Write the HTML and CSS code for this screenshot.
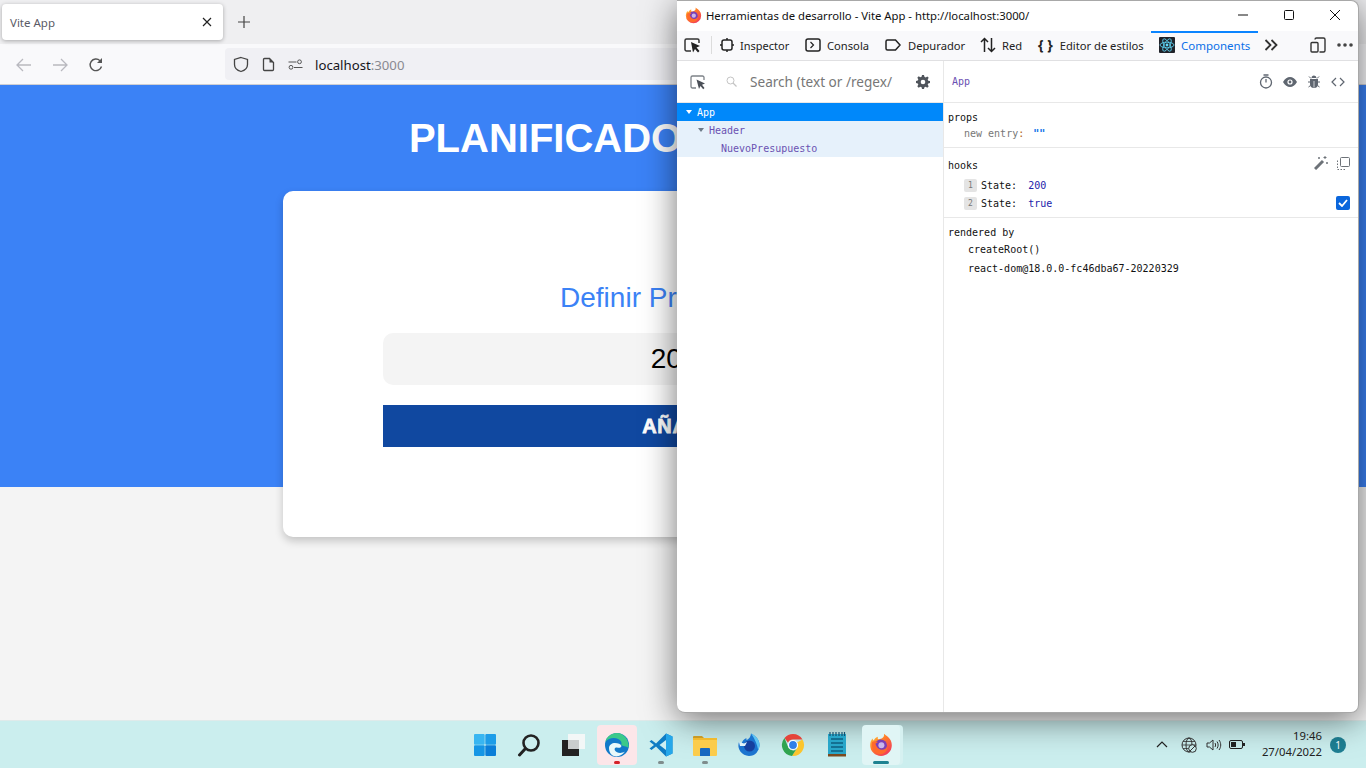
FILE: index.html
```html
<!DOCTYPE html>
<html lang="es">
<head>
    <meta charset="UTF-8">
    <title>Vite App</title>
    <link rel="stylesheet" href="styles.css">
</head>
<body>
    <svg class="defs" width="0" height="0">
        <defs>
            <linearGradient id="fxOuter" x1="0" y1="0" x2="0.8" y2="1">
                <stop offset="0" stop-color="#ffd53a"/>
                <stop offset="0.45" stop-color="#ff7a2a"/>
                <stop offset="1" stop-color="#f0365f"/>
            </linearGradient>
            <symbol id="firefox" viewBox="0 0 24 24">
                <path d="M12 23a10.8 10.8 0 0 1-10.800-10.800c0-2.600.8-5 2.300-6.700.2 1 .6 1.600 1.200 2 .8-2 2.500-3.300 4.300-3.800-.5 1-.4 2 .2 2.600C11.600 6 14 5.500 15 3c-.1-.9-.1-1.600.3-2.300 1 1.500 2.600 2.200 4 3.500 2.300 2 3.500 4.900 3.500 8A10.800 10.800 0 0 1 12 23z" fill="url(#fxOuter)"/>
                <circle cx="11.800" cy="12.600" r="6.200" fill="#7b3fb5"/>
                <circle cx="12.400" cy="12.200" r="3" fill="#c9b6ec"/>
                <path d="M3 9c2-1 4-1 6 0-1 1-2 1-2.500 1.500C7 13 9 16.500 12.500 16.800c3 .2 5-1.500 6-3.500.2 5-4 8.200-7.500 8C6 21 2 16 3 9z" fill="#ff6a2c"/>
            </symbol>
        </defs>
    </svg>

    <div class="browser">
        <div class="tabbar">
            <div class="tab">
                <span class="tab-title">Vite App</span>
                <svg class="tab-close" width="10" height="10" viewBox="0 0 10 10"><path d="M1 1l8 8M9 1l-8 8" stroke="#222" stroke-width="1.200"/></svg>
            </div>
            <svg class="tab-new" width="14" height="14" viewBox="0 0 14 14"><path d="M7 1v12M1 7h12" stroke="#444" stroke-width="1.200"/></svg>
        </div>
        <div class="toolbar">
            <svg class="nav-icon" width="18" height="16" viewBox="0 0 18 16"><path d="M16 8H2M8 2L2 8l6 6" fill="none" stroke="#b9b9bf" stroke-width="1.300"/></svg>
            <svg class="nav-icon" width="18" height="16" viewBox="0 0 18 16"><path d="M2 8h14M10 2l6 6-6 6" fill="none" stroke="#b9b9bf" stroke-width="1.300"/></svg>
            <svg class="nav-icon" width="18" height="16" viewBox="0 0 16 16"><path d="M13.500 9.500A5.800 5.800 0 1 1 12 3.700" fill="none" stroke="#555" stroke-width="1.400"/><path d="M14 1v5h-5z" fill="#555"/></svg>
            <div class="urlbar">
                <svg width="16" height="17" viewBox="0 0 16 17"><path d="M8 1.500l6.500 2v5c0 3.500-3 6-6.500 7-3.500-1-6.500-3.500-6.500-7v-5z" fill="none" stroke="#444" stroke-width="1.300"/></svg>
                <svg width="13" height="15" viewBox="0 0 13 15"><path d="M1.500 2.500a1 1 0 0 1 1-1h5l4 4v7a1 1 0 0 1-1 1h-8a1 1 0 0 1-1-1z" fill="none" stroke="#444" stroke-width="1.300"/><path d="M7.500 1.500v4h4" fill="#444"/></svg>
                <svg width="15" height="11" viewBox="0 0 15 11"><circle cx="11.500" cy="2.800" r="1.900" fill="none" stroke="#555"/><path d="M0.500 3h8M6 8.500h8.500" stroke="#555"/><circle cx="3" cy="8.300" r="1.900" fill="none" stroke="#555"/></svg>
                <span class="url-text">localhost<span class="url-port">:3000</span></span>
            </div>
        </div>
    </div>

    <main class="page">
        <header class="hero">
            <h1 class="hero-title">PLANIFICADOR DE GASTOS</h1>
            <form class="budget-card">
                <label class="budget-label">Definir Presupuesto</label>
                <input class="budget-input" type="text" value="200">
                <input class="budget-submit" type="button" value="AÑADIR">
            </form>
        </header>
    </main>

    <section class="devtools">
        <div class="dt-title">
            <svg width="17" height="17"><use href="#firefox"/></svg>
            <span class="dt-title-text">Herramientas de desarrollo - Vite App - http://localhost:3000/</span>
            <div class="win-btns">
                <svg width="46" height="30" viewBox="0 0 46 30"><path d="M18 15h10" stroke="#111"/></svg>
                <svg width="46" height="30" viewBox="0 0 46 30"><rect x="18.500" y="10.500" width="9" height="9" rx="1" fill="none" stroke="#111"/></svg>
                <svg width="46" height="30" viewBox="0 0 46 30"><path d="M18 10l10 10M28 10L18 20" stroke="#111"/></svg>
            </div>
        </div>

        <div class="dt-tabs">
            <div class="dt-pick">
                <svg width="17" height="16" viewBox="0 0 17 16"><path d="M7 14H2.500A1.500 1.500 0 0 1 1 12.500v-9A1.500 1.500 0 0 1 2.500 2h11A1.500 1.500 0 0 1 15 3.500V6" fill="none" stroke="#333" stroke-width="1.500"/><path d="M7 5l9 4-3.500 1.500L15.500 14l-1.500 1.500-3-3.500L9 15.500z" fill="#222"/></svg>
            </div>
            <div class="dt-tab tab-inspector">
                <svg width="14" height="14" viewBox="0 0 14 14"><rect x="2" y="2" width="10" height="10" rx="2" fill="none" stroke="#222" stroke-width="1.500"/><path d="M7 0v2M7 12v2M0 7h2M12 7h2" stroke="#222" stroke-width="1.500"/></svg>
                <span>Inspector</span>
            </div>
            <div class="dt-tab tab-console">
                <svg width="16" height="14" viewBox="0 0 16 14"><rect x="1" y="1" width="14" height="12" rx="2" fill="none" stroke="#222" stroke-width="1.500"/><path d="M5.500 4l3 3-3 3" fill="none" stroke="#222" stroke-width="1.200"/></svg>
                <span>Consola</span>
            </div>
            <div class="dt-tab tab-debugger">
                <svg width="16" height="12" viewBox="0 0 16 12"><path d="M1 2.500A1.500 1.500 0 0 1 2.500 1h8L15 6l-4.500 5h-8A1.500 1.500 0 0 1 1 9.500z" fill="none" stroke="#222" stroke-width="1.500"/></svg>
                <span>Depurador</span>
            </div>
            <div class="dt-tab tab-network">
                <svg width="16" height="16" viewBox="0 0 16 16"><path d="M4.500 15V2M1 5l3.500-3.500L8 5M11.500 1v13M8 11l3.500 3.500L15 11" fill="none" stroke="#222" stroke-width="1.500"/></svg>
                <span>Red</span>
            </div>
            <div class="dt-tab tab-styles">
                <span class="brace">{ }</span>
                <span>Editor de estilos</span>
            </div>
            <div class="dt-tab tab-components">
                <svg width="16" height="16" viewBox="0 0 16 16"><rect width="16" height="16" rx="1" fill="#20232a"/><g fill="none" stroke="#61dafb" stroke-width="0.800"><ellipse cx="8" cy="8" rx="7" ry="2.800"/><ellipse cx="8" cy="8" rx="7" ry="2.800" transform="rotate(60 8 8)"/><ellipse cx="8" cy="8" rx="7" ry="2.800" transform="rotate(120 8 8)"/></g><circle cx="8" cy="8" r="1.400" fill="#61dafb"/></svg>
                <span>Components</span>
            </div>
            <svg class="dt-more" width="14" height="12" viewBox="0 0 14 12"><path d="M1.500 1l5 5-5 5M7.500 1l5 5-5 5" fill="none" stroke="#333" stroke-width="1.800"/></svg>
            <div class="dt-tabs-end">
                <svg width="16" height="16" viewBox="0 0 16 16"><path d="M5 2.500A1.500 1.500 0 0 1 6.500 1h7A1.500 1.500 0 0 1 15 2.500v11a1.500 1.500 0 0 1-1.500 1.500h-4" fill="none" stroke="#333" stroke-width="1.400"/><rect x="1" y="5.500" width="7" height="9.500" rx="1" fill="none" stroke="#333" stroke-width="1.400"/></svg>
                <svg width="16" height="4" viewBox="0 0 16 4"><circle cx="2" cy="2" r="1.800" fill="#444"/><circle cx="8" cy="2" r="1.800" fill="#444"/><circle cx="14" cy="2" r="1.800" fill="#444"/></svg>
            </div>
        </div>

        <div class="dt-body">
            <aside class="tree">
                <div class="tree-search">
                    <svg class="tree-pick" width="16" height="16" viewBox="0 0 16 16"><path d="M6 14H2.500A1.500 1.500 0 0 1 1 12.500v-9A1.500 1.500 0 0 1 2.500 2h10A1.500 1.500 0 0 1 14 3.500V6" fill="none" stroke="#7d8288" stroke-width="1.300"/><path d="M6.500 5.500l8.500 4-3 1.300 2.500 3.200-1.300 1.300-2.700-3.300-1.500 3z" fill="#4b5058"/></svg>
                    <svg class="tree-glass" width="11" height="11" viewBox="0 0 11 11"><circle cx="4.500" cy="4.500" r="3.500" fill="none" stroke="#c4c4c4"/><path d="M7 7l3.500 3.500" stroke="#c4c4c4" stroke-width="1.200"/></svg>
                    <span class="tree-placeholder">Search (text or /regex/</span>
                    <svg class="tree-gear" width="14" height="14" viewBox="0 0 14 14"><path d="M6 0h2l.4 1.800 1.300.6 1.600-1 1.400 1.400-1 1.600.5 1.300L14 6v2l-1.800.4-.5 1.300 1 1.600-1.400 1.400-1.600-1-1.300.5L8 14H6l-.4-1.800-1.300-.5-1.600 1-1.400-1.400 1-1.600-.5-1.300L0 8V6l1.800-.4.5-1.300-1-1.600 1.400-1.400 1.600 1 1.300-.5z" fill="#50555c"/><circle cx="7" cy="7" r="2.300" fill="#fff"/></svg>
                </div>
                <div class="tree-row tree-row-selected"><i class="caret"></i>App</div>
                <div class="tree-row tree-row-owned level-1"><i class="caret"></i>Header</div>
                <div class="tree-row tree-row-owned level-2">NuevoPresupuesto</div>
            </aside>

            <div class="details">
                <div class="details-head">
                    <span class="details-name">App</span>
                    <div class="details-icons">
                        <svg width="14" height="15" viewBox="0 0 14 15"><circle cx="7" cy="8.500" r="5.500" fill="none" stroke="#5f6670" stroke-width="1.300"/><path d="M4.500 1h5M7 5v3.500" stroke="#5f6670" stroke-width="1.300"/></svg>
                        <svg width="14" height="10" viewBox="0 0 14 10"><path d="M0 5c2-3.300 4.300-5 7-5s5 1.700 7 5c-2 3.300-4.300 5-7 5S2 8.300 0 5z" fill="#5f6670"/><circle cx="7" cy="5" r="2.600" fill="#fff"/><circle cx="7" cy="5" r="1.400" fill="#5f6670"/></svg>
                        <svg width="14" height="14" viewBox="0 0 14 14"><path d="M4.500 3a2.500 2.500 0 0 1 5 0z" fill="#5f6670"/><path d="M3 4h8v5a4 4 0 0 1-8 0z" fill="#5f6670"/><path d="M2 1.500l2 2M12 1.500l-2 2M1 7h2M11 7h2M1.500 12l2-1.500M12.500 12l-2-1.500" stroke="#5f6670"/><path d="M7 6v6.500" stroke="#fff" stroke-width="0.700"/></svg>
                        <svg width="14" height="10" viewBox="0 0 14 10"><path d="M5 1L1 5l4 4M9 1l4 4-4 4" fill="none" stroke="#5f6670" stroke-width="1.200"/></svg>
                    </div>
                </div>

                <div class="panel panel-props">
                    <div class="panel-title">props</div>
                    <div class="prop-row"><span class="prop-key">new entry</span><span class="prop-colon">:</span><span class="prop-str">""</span></div>
                </div>

                <div class="panel panel-hooks">
                    <div class="panel-top">
                        <div class="panel-title">hooks</div>
                        <div class="panel-tools">
                            <svg width="14" height="14" viewBox="0 0 14 14"><path d="M1 13L9 5" stroke="#6d7278" stroke-width="3"/><path d="M11 0v3M9.500 1.500h3M13 6v2M12 7h2M5 1v2M4 2h2" stroke="#6d7278"/></svg>
                            <svg width="13" height="13" viewBox="0 0 13 13"><rect x="3.500" y="0.500" width="9" height="9" rx="1" fill="none" stroke="#6d7278"/><path d="M0.500 3.500v9h9" fill="none" stroke="#6d7278" stroke-dasharray="1.500 1.500"/></svg>
                        </div>
                    </div>
                    <div class="hook-row"><span class="hook-num">1</span><span class="hook-name">State:</span><span class="hook-val">200</span></div>
                    <div class="hook-row"><span class="hook-num">2</span><span class="hook-name">State:</span><span class="hook-val">true</span>
                        <span class="hook-check"><svg width="10" height="8" viewBox="0 0 10 8"><path d="M1 4l3 3 5-6" fill="none" stroke="#fff" stroke-width="1.800"/></svg></span>
                    </div>
                </div>

                <div class="panel panel-rendered">
                    <div class="panel-title">rendered by</div>
                    <div class="owner-row">createRoot()</div>
                    <div class="owner-row">react-dom@18.0.0-fc46dba67-20220329</div>
                </div>
            </div>
        </div>
    </section>

    <footer class="taskbar">
        <div class="tb-left"></div>
        <div class="tb-apps">
            <div class="tb-app">
                <svg width="24" height="24" viewBox="0 0 24 24"><rect x="1" y="1" width="10.700" height="10.700" rx="1" fill="#38b6f1"/><rect x="12.300" y="1" width="10.700" height="10.700" rx="1" fill="#1d9de8"/><rect x="1" y="12.300" width="10.700" height="10.700" rx="1" fill="#1596e5"/><rect x="12.300" y="12.300" width="10.700" height="10.700" rx="1" fill="#0a7ed8"/></svg>
            </div>
            <div class="tb-app">
                <svg width="24" height="24" viewBox="0 0 24 24"><circle cx="14" cy="10" r="7.500" fill="none" stroke="#222" stroke-width="2.600"/><path d="M8.500 15.500L2.500 22" stroke="#222" stroke-width="3" stroke-linecap="round"/></svg>
            </div>
            <div class="tb-app">
                <svg width="24" height="24" viewBox="0 0 24 24"><rect x="7" y="1" width="17" height="15" fill="#f3f7f7"/><rect x="1" y="7" width="17" height="16" fill="#222"/><rect x="7" y="7" width="11" height="9" fill="#c9cdcd"/></svg>
            </div>
            <div class="tb-app tb-app-alert">
                <svg width="26" height="26" viewBox="0 0 26 26"><circle cx="13" cy="13" r="12" fill="#1279c9"/><path d="M24.500 16C25.500 8 20 1 13 1 7 1 2.500 5 1.200 10c3-4 9-5 13-3 3 1.500 4 4 3 6 3 1.500 6 1.500 7.300 3z" fill="#3cc98a"/><path d="M5 16c0-3 3-5 6-5 3 0 6 1 6.500 3-.5 2-3 2-4.500 1.500-2-.5-3 1-2 3 1.500 2.500 6 3.500 10 1C18 24 12 26 8 23c-2-1.500-3-4-3-7z" fill="#e8f8fa"/></svg>
                <i class="tb-dot tb-dot-red"></i>
            </div>
            <div class="tb-app">
                <svg width="24" height="24" viewBox="0 0 24 24"><path d="M17 0.500l6.500 3v17l-6.500 3-10-10-4.500 3.500L0.500 15.500 5 12 0.500 8.500 2.500 7 7 10.500z" fill="#0f7cc4"/><path d="M17 0.500l6.500 3v17l-6.500 3z" fill="#25a7ea"/><path d="M17 7l-6.500 5 6.500 5z" fill="#cdeef2"/></svg>
                <i class="tb-dot"></i>
            </div>
            <div class="tb-app">
                <svg width="24" height="24" viewBox="0 0 24 24"><path d="M0 4a1 1 0 0 1 1-1h8l2 2h-11z" fill="#c99a25"/><path d="M0 5h24v17a1 1 0 0 1-1 1H1a1 1 0 0 1-1-1z" fill="#fbcc4c"/><path d="M0 7h24V5H0z" fill="#f1b92e"/><path d="M7 16a1 1 0 0 1 1-1h8a1 1 0 0 1 1 1v7H7z" fill="#1668c0"/></svg>
                <i class="tb-dot"></i>
            </div>
            <div class="tb-app">
                <svg width="24" height="24" viewBox="0 0 24 24"><path d="M12 23A10.500 10.500 0 0 1 2 9l2.500 2c.5-3 2.500-5 5-6-.3 1-.2 1.500.3 2 2-1 4-3 4.200-6.500 4 2 8.500 5.500 8.500 11.500A10.500 10.500 0 0 1 12 23z" fill="#1c74cf"/><path d="M14 .5c4 2 8.500 5.500 8.500 11.500 0 2-.5 3.500-1.300 5-1-5-3-11-7.200-16.500z" fill="#5fc5f2"/><circle cx="12.500" cy="13" r="5.500" fill="#163f9e"/><path d="M2 9l5 1.500 3-1.500-2 4H3z" fill="#e2f3fb"/></svg>
            </div>
            <div class="tb-app">
                <svg width="24" height="24" viewBox="0 0 24 24"><path d="M12 1a11 11 0 0 1 9.500 5.500H12A5.500 5.500 0 0 0 7 9.700L3.500 5A11 11 0 0 1 12 1z" fill="#e5443a"/><path d="M21.500 6.500A11 11 0 0 1 11 23l4.800-7.500a5.500 5.500 0 0 0 .2-6z" fill="#fbc52d"/><path d="M3.500 5L7.500 15A5.500 5.500 0 0 0 12 17.500c1.400 0 2.700-.5 3.800-2L11 23A11 11 0 0 1 3.500 5z" fill="#2fa44f"/><circle cx="12" cy="12" r="4.500" fill="#2f7fe8" stroke="#fff" stroke-width="1.200"/></svg>
            </div>
            <div class="tb-app">
                <svg width="20" height="25" viewBox="0 0 20 25"><rect x="1" y="2" width="18" height="21" fill="#28a6c9"/><rect x="1" y="22" width="18" height="2.500" fill="#7a4a1f"/><path d="M4 7h12M4 11h12M4 15h12M4 19h12" stroke="#0d5f80" stroke-width="1.500"/><path d="M3 0v4M6 0v4M9 0v4M12 0v4M15 0v4M17.500 0v4" stroke="#14506e" stroke-width="1.200"/></svg>
            </div>
            <div class="tb-app tb-app-active">
                <svg width="24" height="24"><use href="#firefox"/></svg>
                <i class="tb-dot tb-dot-active"></i>
            </div>
        </div>
        <div class="tb-tray">
            <svg width="12" height="7" viewBox="0 0 12 7"><path d="M1 6l5-5 5 5" fill="none" stroke="#222" stroke-width="1.200"/></svg>
            <svg class="tray-globe" width="16" height="16" viewBox="0 0 16 16"><circle cx="8" cy="8" r="7" fill="none" stroke="#333"/><ellipse cx="8" cy="8" rx="3" ry="7" fill="none" stroke="#333"/><path d="M1 8h14M2 4.500h12M2 11.500h12" stroke="#333" stroke-width="0.800"/><circle cx="11.500" cy="11.500" r="3.800" fill="#cbeeee" stroke="#333"/><path d="M9 14l5-5" stroke="#333"/></svg>
            <svg class="tray-sound" width="16" height="14" viewBox="0 0 16 14"><path d="M1 5h2.500L7 2v10L3.500 9H1z" fill="none" stroke="#333"/><path d="M9 5c.8 1.200.8 2.800 0 4M11 3.500c1.500 2 1.500 5 0 7M13 2c2.300 3 2.300 7 0 10" fill="none" stroke="#333"/></svg>
            <svg class="tray-battery" width="16" height="9" viewBox="0 0 16 9"><rect x="0.500" y="0.500" width="13" height="8" rx="1.500" fill="none" stroke="#222"/><rect x="2" y="2" width="5" height="5" fill="#222"/><rect x="14" y="3" width="2" height="3" fill="#222"/></svg>
            <div class="tray-clock"><span>19:46</span><span>27/04/2022</span></div>
            <span class="tray-badge">1</span>
        </div>
    </footer>
</body>
</html>
```

FILE: styles.css
```css
*{
    box-sizing: border-box;
}
html,body{
    margin:0;
    padding:0;
    height:100%;
    overflow:hidden;
}
body{
    width:1366px;
    height:768px;
    position:relative;
    display:flex;
    flex-direction:column;
    background-color:#f4f4f4;
    font-family:"Noto Sans",sans-serif;
}
.defs{
    position:absolute;
}

/* browser chrome */
.tabbar{
    height:44px;
    background-color:#efeff1;
    display:flex;
    align-items:flex-start;
    padding:4px 0 0 2px;
}
.tab{
    width:221px;
    height:36px;
    background-color:#fff;
    border-radius:4px;
    box-shadow:0 1px 4px rgba(0,0,0,0.3);
    display:flex;
    align-items:center;
    justify-content:space-between;
    padding:0 11px 0 8px;
}
.tab-title{
    font-size:11.5px;
    color:#5b5b66;
}
.tab-new{
    margin:11px 0 0 14px;
}
.toolbar{
    height:41px;
    background-color:#f9f9fb;
    border-bottom:1px solid #cfcfd3;
    display:flex;
    align-items:center;
    padding:0 0 0 15px;
}
.nav-icon{
    margin:2px 18px 0 0;
}
.urlbar{
    width:700px;
    height:32px;
    margin-left:102px;
    background-color:#f0f0f4;
    border-radius:4px;
    display:flex;
    align-items:center;
    gap:13px;
    padding:0 0 0 8px;
}
.url-text{
    font-size:13.200px;
    color:#15141a;
    padding-top:1px;
    margin-left:-1px;
}
.url-port{
    color:#8a8a91;
}

/* the page */
.page{
    flex:1;
}
.hero{
    height:402px;
    background-color:#3b82f6;
    padding-top:28px;
    font-family:"Liberation Sans",sans-serif;
}
.hero-title{
    margin:0;
    text-align:center;
    color:#fff;
    font-size:40px;
    line-height:50px;
    font-weight:700;
}
.budget-card{
    width:800px;
    height:346px;
    margin:28px auto 0;
    padding:89px 100px 0;
    background-color:#fff;
    border-radius:10px;
    box-shadow:0 4px 8px rgba(0,0,0,0.2);
    display:flex;
    flex-direction:column;
}
.budget-label{
    color:#3b82f6;
    font-size:28px;
    line-height:36px;
    text-align:center;
    margin-bottom:17px;
}
.budget-input{
    height:52px;
    border:none;
    border-radius:10px;
    background-color:#f4f4f4;
    color:#000;
    font-family:inherit;
    font-size:28px;
    text-align:center;
    padding:0 18px 0 0;
    margin-bottom:20px;
}
.budget-submit{
    height:42px;
    border:none;
    background-color:#1048a0;
    color:#fff;
    font-family:inherit;
    font-size:20px;
    font-weight:900;
    letter-spacing:0.6px;
    -webkit-text-stroke:0.8px #fff;
}

/* devtools window */
.devtools{
    position:absolute;
    left:677px;
    top:0;
    width:682px;
    height:713px;
    background-color:#fff;
    border-radius:0 8px 8px 8px;
    border:1px solid #a8a8a8;
    border-left:none;
    box-shadow:0 6px 34px rgba(0,0,0,0.55);
    display:flex;
    flex-direction:column;
    overflow:hidden;
}
.dt-title{
    height:30px;
    flex:none;
    display:flex;
    align-items:center;
    padding:0 0 2px 8px;
}
.dt-title-text{
    margin-left:4px;
    font-size:11.300px;
    color:#111;
    white-space:nowrap;
}
.win-btns{
    margin-left:auto;
    margin-right:0;
    display:flex;
}
.dt-tabs{
    height:30px;
    flex:none;
    background-color:#f9f9fb;
    border-bottom:1px solid #e0e0e2;
    display:flex;
    align-items:center;
    padding-bottom:1px;
    font-size:11.200px;
    color:#222;
}
.dt-pick{
    width:35px;
    height:18px;
    padding-left:7px;
    border-right:1px solid #dcdcdc;
    display:flex;
    align-items:center;
}
.dt-tab{
    height:100%;
    flex:none;
    display:flex;
    align-items:center;
    white-space:nowrap;
    gap:6px;
}
.tab-inspector{
    width:85px;
    padding-left:8px;
    font-size:11px;
}
.tab-console{
    width:81px;
    padding-left:8px;
}
.tab-debugger{
    width:94px;
    padding-left:7px;
    gap:7px;
}
.tab-network{
    width:58px;
    padding-left:8px;
}
.tab-styles{
    width:121px;
    padding-left:8px;
    gap:7px;
}
.brace{
    font-weight:700;
    font-size:14px;
    line-height:14px;
}
.tab-components{
    width:107px;
    padding-left:8px;
    padding-bottom:2px;
    color:#0a6fe8;
    font-size:11.500px;
    border-top:2px solid #0a84ff;
}
.dt-more{
    margin-left:6px;
}
.dt-tabs-end{
    margin-left:auto;
    padding-right:5px;
    display:flex;
    align-items:center;
    gap:11px;
}
.dt-body{
    flex:1;
    display:flex;
    font-family:"DejaVu Sans Mono",monospace;
    font-size:10px;
    min-height:0;
}

/* component tree */
.tree{
    width:267px;
    flex:none;
    border-right:1px solid #e8e8e8;
}
.tree-search{
    height:42px;
    display:flex;
    align-items:center;
    border-bottom:1px solid #e8e8e8;
    padding-left:13px;
    font-family:"Noto Sans",sans-serif;
}
.tree-pick{
    margin-right:20px;
}
.tree-glass{
    margin-right:13px;
}
.tree-placeholder{
    width:146px;
    font-size:13.600px;
    color:#777;
    white-space:nowrap;
    overflow:hidden;
    flex:none;
}
.tree-gear{
    margin-left:20px;
}
.tree-row{
    height:18px;
    display:flex;
    align-items:center;
    padding-left:9px;
    white-space:nowrap;
}
.caret{
    width:0;
    height:0;
    margin-right:5px;
    border-left:3px solid transparent;
    border-right:3px solid transparent;
    border-top:4px solid #fff;
}
.tree-row-selected{
    background-color:#0088fa;
    color:#fff;
}
.tree-row-owned{
    background-color:#e6f1fb;
    color:#6a51b2;
}
.tree-row-owned .caret{
    border-top-color:#6d7a88;
}
.level-1{
    padding-left:21px;
}
.level-2{
    padding-left:44px;
}

/* selected component details */
.details{
    flex:1;
    min-width:0;
    color:#111;
}
.details-head{
    height:42px;
    border-bottom:1px solid #e8e8e8;
    display:flex;
    align-items:center;
    justify-content:space-between;
    padding:0 13px 0 8px;
}
.details-name{
    color:#6a51b2;
}
.details-icons{
    display:flex;
    align-items:center;
    gap:10px;
}
.panel{
    border-bottom:1px solid #e8e8e8;
    padding:0 8px 0 4px;
}
.panel-props{
    height:45px;
    padding-top:8px;
}
.panel-hooks{
    height:70px;
    padding-top:8px;
}
.panel-rendered{
    border-bottom:none;
    padding-top:8px;
}
.panel-title{
    line-height:14px;
}
.panel-top{
    display:flex;
    justify-content:space-between;
    align-items:flex-start;
    margin-bottom:3px;
}
.panel-top .panel-title{
    padding-top:3px;
}
.panel-tools{
    display:flex;
    gap:9px;
    align-items:center;
}
.prop-row{
    margin:2px 0 0 16px;
    line-height:14px;
}
.prop-key{
    color:#777;
}
.prop-colon{
    color:#b0601a;
    margin-right:9px;
}
.prop-str{
    color:#0a6fe8;
    font-weight:700;
}
.hook-row{
    height:18px;
    display:flex;
    align-items:center;
    margin-left:16px;
}
.hook-num{
    width:13px;
    height:13px;
    background-color:#e4e4e4;
    border-radius:2px;
    color:#777;
    font-size:8px;
    display:flex;
    align-items:center;
    justify-content:center;
    margin-right:4px;
}
.hook-name{
    margin-right:11px;
}
.hook-val{
    color:#2222aa;
}
.hook-check{
    width:14px;
    height:14px;
    margin-left:auto;
    background-color:#0a66dc;
    border-radius:2px;
    display:flex;
    align-items:center;
    justify-content:center;
}
.owner-row{
    margin-left:20px;
    height:18px;
    margin-top:1px;
    display:flex;
    align-items:center;
}
.panel-title + .owner-row{
    margin-top:0;
}

/* windows taskbar */
.taskbar{
    height:48px;
    flex:none;
    background-color:#cbeeee;
    border-top:1px solid #dfeaea;
    display:grid;
    grid-template-columns:1fr auto 1fr;
    align-items:center;
}
.tb-apps{
    display:flex;
}
.tb-app{
    width:44px;
    height:40px;
    position:relative;
    display:flex;
    align-items:center;
    justify-content:center;
    border-radius:4px;
}
.tb-app-alert{
    background-color:#fce6e9;
    width:40px;
    margin:0 2px;
}
.tb-app-active{
    background-color:#e0f5f5;
    width:38px;
    margin:0 3px;
    box-shadow:3px 0 0 #d6f1f1;
}
.tb-dot{
    position:absolute;
    left:50%;
    bottom:1px;
    width:6px;
    height:3px;
    margin-left:-3px;
    border-radius:2px;
    background-color:#7f8c8c;
}
.tb-dot-red{
    background-color:#d4222a;
}
.tb-dot-active{
    width:16px;
    margin-left:-8px;
    background-color:#1e8291;
}
.tb-tray{
    display:flex;
    align-items:center;
    justify-content:flex-end;
    padding-right:20px;
}
.tray-globe{
    margin-left:13px;
}
.tray-sound{
    margin-left:9px;
}
.tray-battery{
    margin-left:7px;
}
.tray-clock{
    margin-left:6px;
    width:71px;
    padding-bottom:2px;
    display:flex;
    flex-direction:column;
    align-items:flex-end;
    font-size:11.300px;
    line-height:16px;
    color:#222;
}
.tray-badge{
    width:16px;
    height:16px;
    margin-left:8px;
    border-radius:50%;
    background-color:#1e7f93;
    color:#fff;
    font-size:10px;
    display:flex;
    align-items:center;
    justify-content:center;
}
```
